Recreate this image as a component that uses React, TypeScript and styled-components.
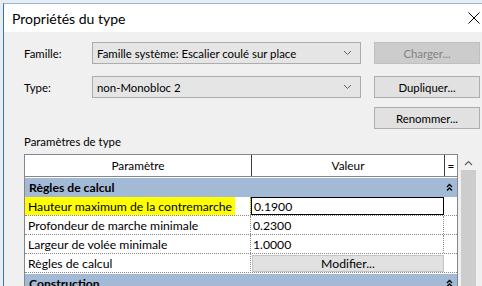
import React from "react";
import styled, { createGlobalStyle } from "styled-components";

const GlobalStyle = createGlobalStyle`
  html, body {
    margin: 0;
    padding: 0;
    background: #f4f6f8;
    overflow: hidden;
  }
  body {
    font-family: Lato, "Noto Sans", Arial, sans-serif;
    font-size: 11.4px;
    color: #000;
  }
`;

const Desktop = styled.div`
  width: 482px;
  height: 286px;
  padding: 3px 0 0 3px;
  box-sizing: border-box;
  background: #e9edf1;
`;

const Window = styled.div`
  border-left: 1px solid #2b79c2;
  border-top: 1px solid #8fb6dc;
  height: 283px;
  box-sizing: border-box;
  display: flex;
  flex-direction: column;
  overflow: hidden;
`;

const TitleBar = styled.div`
  height: 28px;
  background: #fff;
  display: flex;
  align-items: center;
  justify-content: space-between;
  padding: 0 2px 0 8px;
  font-size: 14px;
  flex-shrink: 0;
`;

const Body = styled.div`
  flex: 1;
  background: #f0f0f0;
  padding: 10px 0 0 20px;
  display: flex;
  flex-direction: column;
`;

const FormRow = styled.div<{ gap?: number }>`
  display: grid;
  grid-template-columns: 55px 269px 106px;
  column-gap: 13px;
  align-items: center;
  height: 22px;
  margin-bottom: ${(p) => p.gap ?? 12}px;
`;

const Label = styled.span`
  white-space: nowrap;
`;

const Combo = styled.div`
  height: 22px;
  box-sizing: border-box;
  border: 1px solid #acacac;
  background: #e5e5e5;
  display: flex;
  align-items: center;
  justify-content: space-between;
  padding: 0 8px 0 4px;
  white-space: nowrap;
`;

const Button = styled.div<{ disabled?: boolean }>`
  height: 22px;
  box-sizing: border-box;
  border: 1px solid ${(p) => (p.disabled ? "#bfbfbf" : "#adadad")};
  background: ${(p) => (p.disabled ? "#cccccc" : "#e1e1e1")};
  color: ${(p) => (p.disabled ? "#838383" : "#000")};
  display: flex;
  align-items: center;
  justify-content: center;
  white-space: nowrap;
`;

const SectionLabel = styled.div`
  margin: 6px 0 5px 0;
  height: 14px;
  line-height: 14px;
`;

const TableArea = styled.div`
  display: flex;
  align-items: flex-start;
`;

const Grid = styled.div`
  width: 434px;
  border: 1px solid #828790;
  border-bottom: none;
  background: #fff;
  box-sizing: border-box;
  font-size: 12.2px;
  white-space: nowrap;
`;

const HeaderRow = styled.div`
  display: grid;
  grid-template-columns: 226px 193px 13px;
  height: 21px;
  border-bottom: 1px solid #828790;
`;

const HeaderCell = styled.div`
  display: flex;
  align-items: center;
  justify-content: center;
  font-size: 11.8px;
  & + & {
    border-left: 1px solid #3c3c3c;
  }
`;

const GroupRow = styled.div`
  height: 19px;
  margin-top: 1px;
  background: #a3bad6;
  display: flex;
  align-items: center;
  justify-content: space-between;
  padding: 0 4px 0 4px;
  font-weight: bold;
  font-size: 12.2px;
`;

const DataRow = styled.div`
  display: grid;
  grid-template-columns: 226px 193px 13px;
  height: 18px;
  border-bottom: 1px dotted #8a8a8a;
`;

const NameCell = styled.div<{ marked?: boolean }>`
  display: flex;
  align-items: center;
  padding-left: 3px;
  overflow: hidden;
  border-right: 1px dotted #8a8a8a;
  background: ${(p) =>
    p.marked
      ? "linear-gradient(to right, #ffff00 0, #ffff00 210px, transparent 210px)"
      : "transparent"};
`;

const ValueCell = styled.div<{ active?: boolean }>`
  display: flex;
  align-items: center;
  padding-left: 2px;
  box-sizing: border-box;
  border: ${(p) => (p.active ? "1px solid #000" : "none")};
  border-right: ${(p) => (p.active ? "1px solid #000" : "1px dotted #8a8a8a")};
`;

const EditButton = styled.div`
  margin: 1px 0 1px 1px;
  background: #e1e1e1;
  border: 1px solid #c4c4c4;
  display: flex;
  align-items: center;
  justify-content: center;
`;

const Scrollbar = styled.div`
  width: 21px;
  display: flex;
  flex-direction: column;
  align-items: center;
  padding-top: 6px;
`;

const ScrollThumb = styled.div`
  margin-top: 4px;
  width: 15px;
  height: 120px;
  background: #cdcdcd;
`;

const Chevron = () => (
  <svg width={9} height={6} viewBox="0 0 9 6">
    <path d="M1 1 L4.5 4.5 L8 1" fill="none" stroke="#606060" strokeWidth="1" />
  </svg>
);

const DoubleUp = () => (
  <svg width="7" height="9" viewBox="0 0 7 9">
    <path d="M1 4 L3.5 1.5 L6 4 M1 7.5 L3.5 5 L6 7.5" fill="none" stroke="#000" strokeWidth="1.3" />
  </svg>
);

const CloseIcon = () => (
  <svg width="12" height="12" viewBox="0 0 12 12">
    <path d="M0.5 0.5 L11.5 11.5 M11.5 0.5 L0.5 11.5" stroke="#000" strokeWidth="1" />
  </svg>
);

const rows = [
  { name: "Hauteur maximum de la contremarche", value: "0.1900", marked: true },
  { name: "Profondeur de marche minimale", value: "0.2300" },
  { name: "Largeur de volée minimale", value: "1.0000" },
];

export default function App() {
  return (
    <>
      <GlobalStyle />
      <Desktop>
        <Window>
          <TitleBar>
            <span>Propriétés du type</span>
            <CloseIcon />
          </TitleBar>
          <Body>
            <FormRow>
              <Label>Famille:</Label>
              <Combo>
                <span>Famille système: Escalier coulé sur place</span>
                <Chevron />
              </Combo>
              <Button disabled>Charger...</Button>
            </FormRow>
            <FormRow gap={9}>
              <Label>Type:</Label>
              <Combo>
                <span>non-Monobloc 2</span>
                <Chevron />
              </Combo>
              <Button>Dupliquer...</Button>
            </FormRow>
            <FormRow gap={0}>
              <span />
              <span />
              <Button>Renommer...</Button>
            </FormRow>
            <SectionLabel>Paramètres de type</SectionLabel>
            <TableArea>
              <Grid>
                <HeaderRow>
                  <HeaderCell>Paramètre</HeaderCell>
                  <HeaderCell>Valeur</HeaderCell>
                  <HeaderCell>=</HeaderCell>
                </HeaderRow>
                <GroupRow>
                  <span>Règles de calcul</span>
                  <DoubleUp />
                </GroupRow>
                {rows.map((r, i) => (
                  <DataRow key={r.name}>
                    <NameCell marked={r.marked}>{r.name}</NameCell>
                    <ValueCell active={i === 0}>{r.value}</ValueCell>
                    <span />
                  </DataRow>
                ))}
                <DataRow>
                  <NameCell>Règles de calcul</NameCell>
                  <EditButton>Modifier...</EditButton>
                  <span />
                </DataRow>
                <GroupRow>
                  <span>Construction</span>
                  <DoubleUp />
                </GroupRow>
              </Grid>
              <Scrollbar>
                <svg width="9" height="6" viewBox="0 0 9 6">
                  <path d="M1 5 L4.5 1.5 L8 5" fill="none" stroke="#606060" strokeWidth="1.2" />
                </svg>
                <ScrollThumb />
              </Scrollbar>
            </TableArea>
          </Body>
        </Window>
      </Desktop>
    </>
  );
}
